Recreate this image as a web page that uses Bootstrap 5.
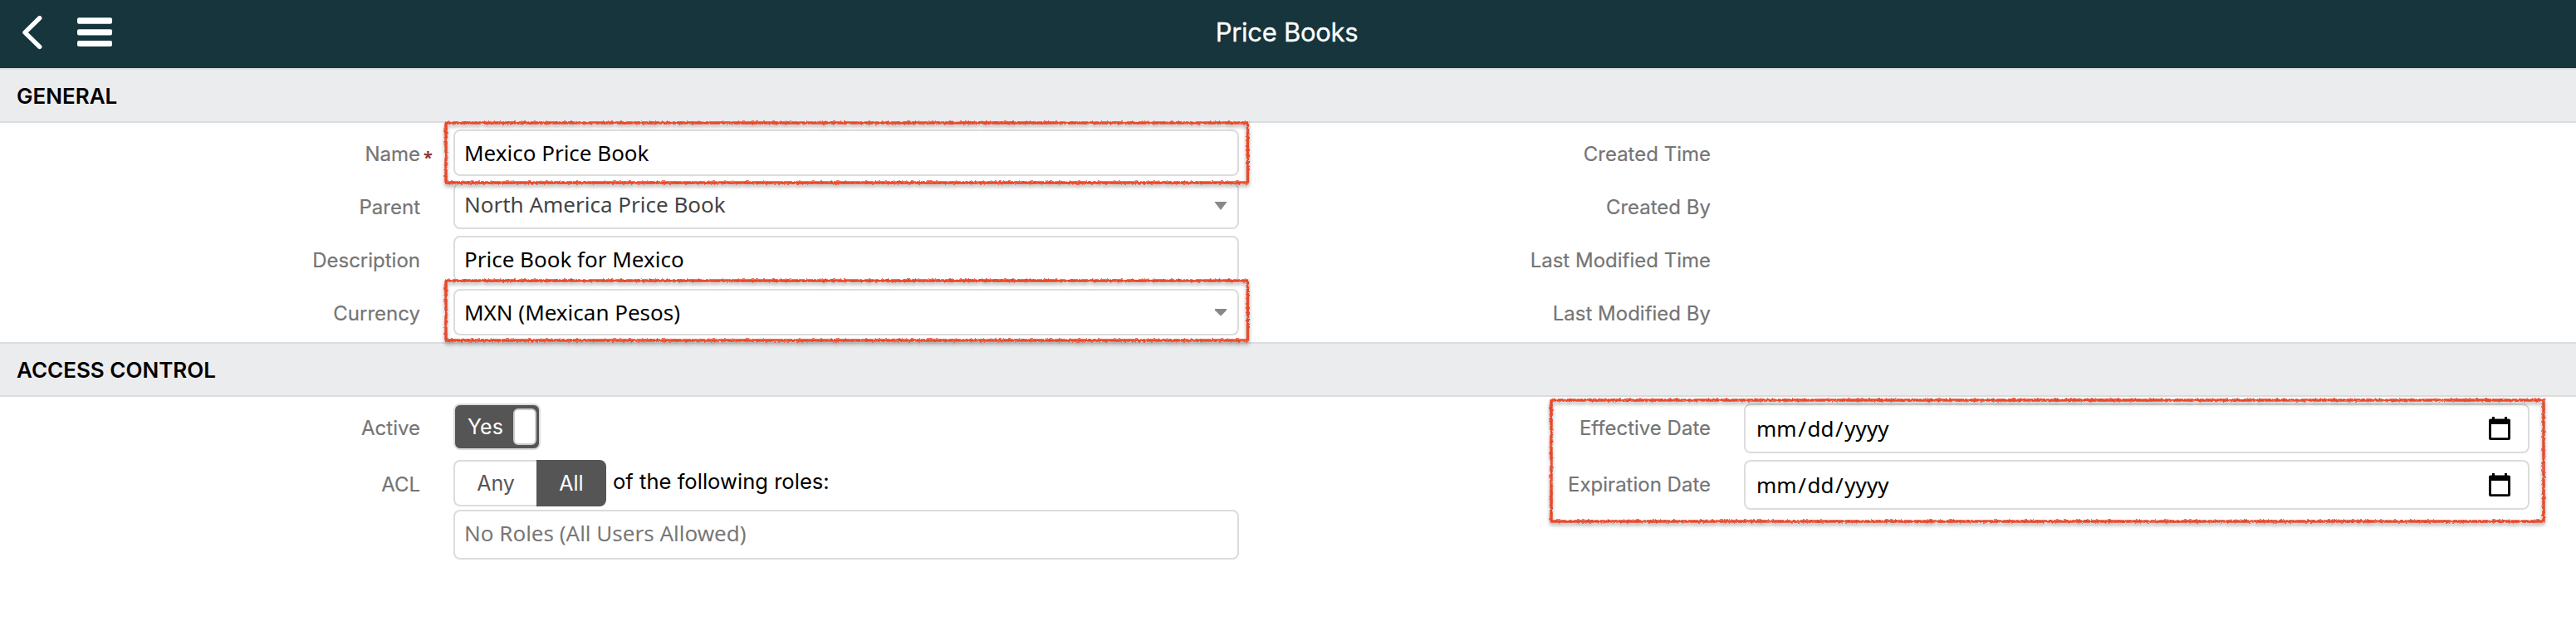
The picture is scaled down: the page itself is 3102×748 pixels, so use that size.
<!DOCTYPE html>
<html lang="en">
<head>
<meta charset="utf-8">
<meta name="viewport" content="width=device-width, initial-scale=1">
<title>Price Books</title>
<link href="https://cdn.jsdelivr.net/npm/bootstrap@5.3.0/dist/css/bootstrap.min.css" rel="stylesheet">
<style>
  body { font-family: Inter, "Liberation Sans", sans-serif; color: #000; background: #fff; overflow: hidden; }
  .topbar { height: 82px; background: #16353c; color: #fff; display: grid; grid-template-columns: 1fr auto 1fr; padding: 0 29px 0 26px; }
  .topbar h1 { font-size: 31px; line-height: 40px; font-weight: 400; letter-spacing: -.3px; padding-bottom: 5px; -webkit-text-stroke: .3px #fff; }
  .section-bar { height: 66px; background: #ebecee; border: solid #dcdcdc; border-width: 2px 0; padding: 2px 0 0 20px; }
  .section-bar h2 { font-size: 26px; line-height: 32px; font-weight: 600; }
  .form-half { width: 1554px; }
  .form-half + .form-half { width: 1548px; }
  .field { padding: 4px 0; min-height: 64px; }
  .field-label { width: 546px; padding-right: 40px; text-align: right; font-size: 24px; line-height: 30px; color: #757575; padding-top: 15px; -webkit-text-stroke: .2px #757575; }
  .field-body { width: 946px; }
  .box { position: relative; height: 56px; border: 2px solid #dcdcdc; border-radius: 8px; background: #fff; padding: 0 12px 0 11px; font: 26px/36px "Noto Sans", "Open Sans", sans-serif; color: #000; }
  .box.dated { height: 60px; padding: 0 21px 0 13px; }
  .box.dated i { font-style: normal; margin: 0 1.6px; }
  .required { position: absolute; left: 510px; top: 23px; color: #8d3434; font: 700 20px/30px "Noto Sans", sans-serif; }
  .callout-box { position: absolute; overflow: visible; z-index: 2; pointer-events: none; filter: drop-shadow(0 3px 2px rgba(0,0,0,.32)); }
  .callout-box rect { fill: none; stroke: #e9482b; stroke-width: 3.4px; filter: url(#rough); }
  .toggle { width: 105px; height: 56px; background: #555; color: #fff; border: 2px solid #dcdcdc; border-radius: 8px; padding: 0 3px 0 15px; font-size: 25px; }
  .toggle-text { padding-top: 2px; }
  .knob { width: 28px; height: 44px; background: #fff; border: 2px solid #ccc; border-radius: 6px; }
  .acl-btn { height: 56px; font-size: 25px; border: 2px solid #dcdcdc; padding-top: 2px; }
  .acl-any { width: 100px; border-right: 0; border-radius: 8px 0 0 8px; color: #555; }
  .acl-all { width: 84px; background: #555; border-color: #555; border-radius: 0 8px 8px 0; color: #fff; }
  .acl-text { font-size: 25.6px; line-height: 32px; margin: 10px 0 0 8px; }
  .roles { height: 60px; color: #777; }
  .picked { color: #444; }
</style>
</head>
<body>
<svg width="0" height="0" class="position-absolute" aria-hidden="true">
  <filter id="rough" filterUnits="userSpaceOnUse" x="-10" y="-10" width="1240" height="180">
    <feTurbulence type="fractalNoise" baseFrequency=".35" numOctaves="2" seed="4" result="n"/>
    <feDisplacementMap in="SourceGraphic" in2="n" scale="3.4" xChannelSelector="R" yChannelSelector="G"/>
  </filter>
</svg>

<header class="topbar align-items-center">
  <div class="d-flex align-items-center">
    <svg width="110" height="44" viewBox="26 17 110 44" aria-label="Navigation">
      <path d="M47.700 19.600 30 36.900l17.700 17.300" transform="translate(0 .2)" fill="none" stroke="#fff" stroke-width="5.500" stroke-linecap="round" stroke-linejoin="round"/>
      <g fill="#fff"><rect x="93" y="19.300" width="42" height="7.500" rx="2"/><rect x="93" y="33.200" width="42" height="7.300" rx="2"/><rect x="93" y="47" width="42" height="7" rx="2"/></g>
    </svg>
  </div>
  <h1 class="m-0">Price Books</h1>
  <div></div>
</header>

<main>
  <div class="section-bar d-flex align-items-center"><h2 class="m-0">GENERAL</h2></div>
  <section class="d-flex py-1">
    <div class="form-half">
      <div class="field d-flex position-relative">
        <label class="field-label">Name</label><span class="required">*</span>
        <div class="field-body">
          <div class="box d-flex align-items-center">Mexico Price Book
            <svg class="callout-box" style="left:-11.5px;top:-10.5px" width="966" height="72"><rect x="0" y="0" width="965.500" height="72"/></svg>
          </div>
        </div>
      </div>
      <div class="field d-flex">
        <label class="field-label">Parent</label>
        <div class="field-body">
          <div class="box picked d-flex align-items-center justify-content-between"><span class="pb-1">North America Price Book</span>
            <svg width="16" height="10" viewBox="0 0 16 10"><path d="M.3 0h15.400L8 10z" fill="#888"/></svg>
          </div>
        </div>
      </div>
      <div class="field d-flex">
        <label class="field-label">Description</label>
        <div class="field-body"><div class="box d-flex align-items-center">Price Book for Mexico</div></div>
      </div>
      <div class="field d-flex">
        <label class="field-label">Currency</label>
        <div class="field-body">
          <div class="box d-flex align-items-center justify-content-between"><span>MXN (Mexican Pesos)</span>
            <svg width="16" height="9" viewBox="0 0 16 9"><path d="M1 0h14v1.800L8 8.700 1 1.800z" fill="#888"/></svg>
            <svg class="callout-box" style="left:-11.5px;top:-12.5px" width="966" height="72"><rect x="0" y="0" width="965.500" height="72"/></svg>
          </div>
        </div>
      </div>
    </div>
    <div class="form-half">
      <div class="field d-flex"><label class="field-label">Created Time</label></div>
      <div class="field d-flex"><label class="field-label">Created By</label></div>
      <div class="field d-flex"><label class="field-label">Last Modified Time</label></div>
      <div class="field d-flex"><label class="field-label">Last Modified By</label></div>
    </div>
  </section>

  <div class="section-bar d-flex align-items-center"><h2 class="m-0">ACCESS CONTROL</h2></div>
  <section class="d-flex py-1">
    <div class="form-half">
      <div class="field d-flex mb-1">
        <label class="field-label">Active</label>
        <div class="toggle d-flex align-items-center justify-content-between"><span class="toggle-text">Yes</span><span class="knob"></span></div>
      </div>
      <div class="field d-flex">
        <label class="field-label">ACL</label>
        <div class="field-body">
          <div class="d-flex mb-1">
            <div class="acl-btn acl-any d-flex align-items-center justify-content-center">Any</div>
            <div class="acl-btn acl-all d-flex align-items-center justify-content-center">All</div>
            <span class="acl-text">of the following roles:</span>
          </div>
          <div class="box roles d-flex align-items-center"><span class="pb-1">No Roles (All Users Allowed)</span></div>
        </div>
      </div>
    </div>
    <div class="form-half">
      <div class="field d-flex">
        <label class="field-label">Effective Date</label>
        <div class="field-body">
          <div class="box dated d-flex align-items-center justify-content-between"><span>mm<i>/</i>dd<i>/</i>yyyy</span>
            <svg width="26" height="28" viewBox="0 0 26 28"><path fill-rule="evenodd" d="M4 0h3v2.500h12V0h3v2.500h2a2 2 0 0 1 2 2V26a2 2 0 0 1-2 2H2a2 2 0 0 1-2-2V4.500a2 2 0 0 1 2-2h2zM3 9v16.300h20V9z"/></svg>
            <svg class="callout-box" style="left:-234.500px;top:-6.500px" width="1195" height="146"><rect x="0" y="0" width="1195" height="146"/></svg>
          </div>
        </div>
      </div>
      <div class="field d-flex">
        <label class="field-label">Expiration Date</label>
        <div class="field-body">
          <div class="box dated d-flex align-items-center justify-content-between"><span>mm<i>/</i>dd<i>/</i>yyyy</span>
            <svg width="26" height="28" viewBox="0 0 26 28"><path fill-rule="evenodd" d="M4 0h3v2.500h12V0h3v2.500h2a2 2 0 0 1 2 2V26a2 2 0 0 1-2 2H2a2 2 0 0 1-2-2V4.500a2 2 0 0 1 2-2h2zM3 9v16.300h20V9z"/></svg>
          </div>
        </div>
      </div>
    </div>
  </section>
</main>
<script src="https://cdn.jsdelivr.net/npm/bootstrap@5.3.0/dist/js/bootstrap.bundle.min.js"></script>
</body>
</html>
